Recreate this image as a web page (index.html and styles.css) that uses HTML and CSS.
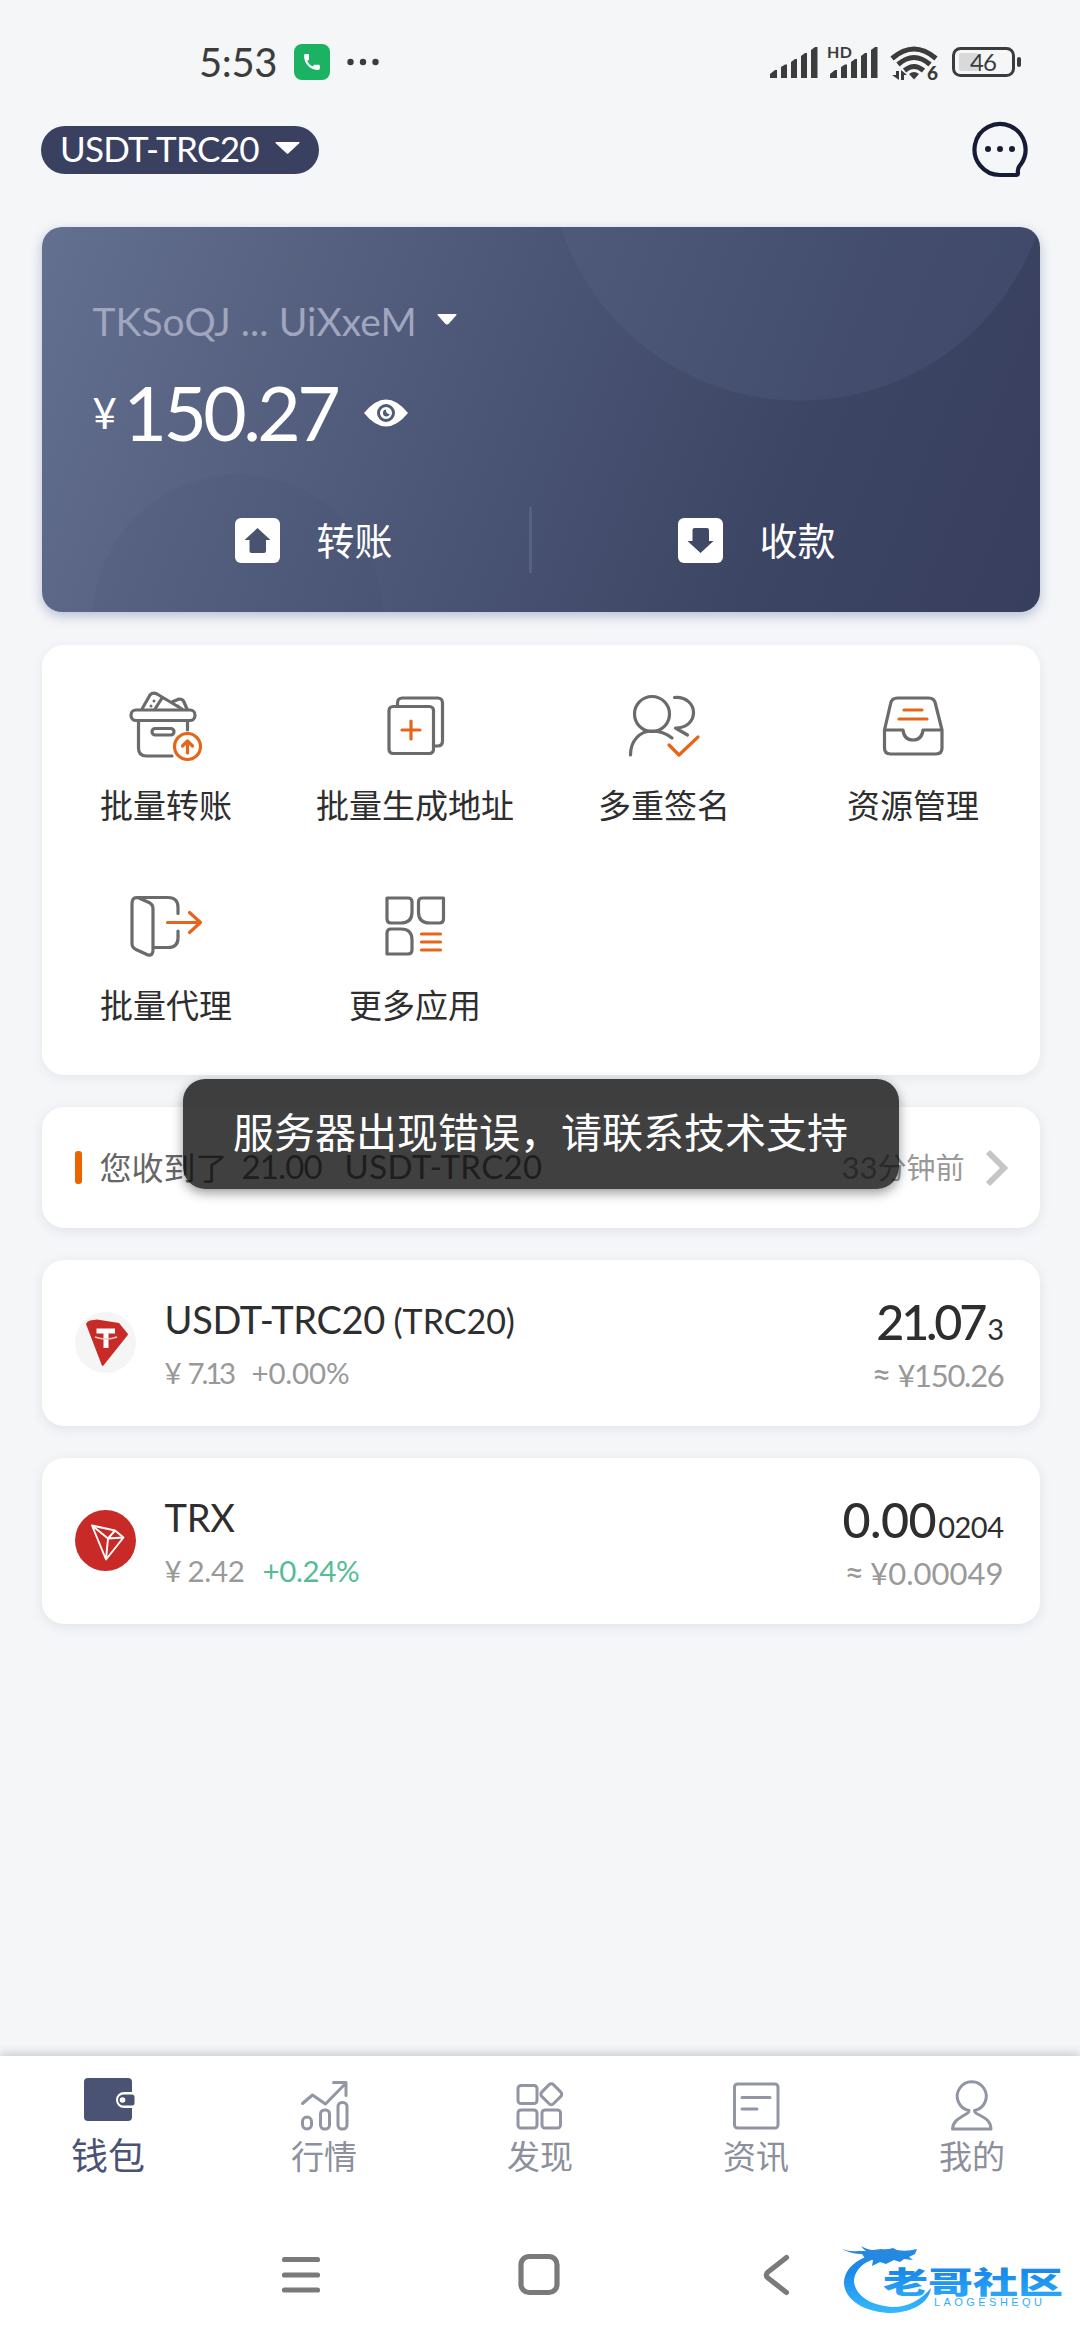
FILE: index.html
```html
<!DOCTYPE html>
<html lang="zh-CN">
<head>
<meta charset="utf-8">
<title>钱包</title>
<link rel="stylesheet" href="styles.css">
</head>
<body>
<div class="screen">
  <div class="status">
    <div class="status-left">
      <span class="clock">5:53</span>
      <svg class="phone-badge" width="36" height="36" viewBox="0 0 36 36"><rect width="36" height="36" rx="8" fill="#1bb264"/><path d="M10 11.500c0-1 .6-1.500 1.500-1.500h2.500c.6 0 1 .4 1 1v4.500c0 .6-.5 1-1 1h-1c1.500 3.500 3.500 5 6.500 6v-.8c0-.7.4-1 1-1h4c.8 0 1.300.5 1.300 1.200v2.400c0 1.200-.6 1.700-1.500 1.700C15.500 26 10 19 10 11.500z" fill="#fff"/></svg>
      <svg class="more-dots" width="32" height="8" viewBox="0 0 32 8" fill="#3c3c3c"><circle cx="3.500" cy="4" r="3.200"/><circle cx="16" cy="4" r="3.200"/><circle cx="28.500" cy="4" r="3.200"/></svg>
    </div>
    <svg class="status-icons" width="256" height="44" viewBox="768 40 256 44" fill="#3c3c3c">
      <g id="bars"><path d="M770 74l5-4h2v8h-7z"/><path d="M781 67l4-2.500h2V78h-6z"/><path d="M791 62l4-3h2v19h-6z"/><path d="M801 56l4-3h2v25h-6z"/><path d="M811 50l4-3h2.500v31H811z"/></g>
      <use href="#bars" x="60"/>
      <text class="hd" x="827" y="58" textLength="25">HD</text>
      <g fill="none" stroke="#3c3c3c" stroke-width="5"><path d="M892 58.500q22-19 44 0"/><path d="M898 64.500q16-14 32 0"/><path d="M904.500 70.500q9.500-8 19 0"/></g>
      <path d="M909 74q5-4 10 0l-5 5.500zM896 71h3v9l-7-5h4zM901 80V70l6 5h-3v5z"/>
      <text class="six" x="927" y="80">6</text>
      <rect x="953.500" y="48.500" width="60" height="27" rx="7" fill="none" stroke="#3c3c3c" stroke-width="3"/>
      <rect x="959" y="53" width="19" height="18" rx="2" fill="#d8d9da"/>
      <rect x="1017" y="57" width="4" height="10" rx="2"/>
      <text class="level" x="970" y="71" textLength="27">46</text>
    </svg>
  </div>

  <div class="topbar">
    <div class="chain">USDT-TRC20<svg width="25" height="12" viewBox="0 0 25 12"><path d="M1 0h23q1 .5 0 1.500L13.500 11.300q-1 1-2 0L1 1.500Q0 .5 1 0z" fill="#fff"/></svg></div>
    <svg class="chat" width="60" height="60" viewBox="970 120 60 60"><path d="M1000 175a25.500 25.500 0 1 1 21-11q-4 4-3 9 0 2-2 2z" fill="none" stroke="#171b35" stroke-width="4.200" stroke-linejoin="round"/><g fill="#171b35"><circle cx="988" cy="149" r="3"/><circle cx="1000" cy="149" r="3"/><circle cx="1012" cy="149" r="3"/></g></svg>
  </div>

  <main class="content">
    <section class="balance">
      <div class="address"><span>TKSoQJ ... UiXxeM</span><svg width="20" height="11" viewBox="0 0 20 11"><path d="M1 0h18q1 .5 0 1.500L12 9.500q-2 2-4 0L1 1.500Q0 .5 1 0z" fill="#fff"/></svg></div>
      <div class="total"><span class="yen">¥</span><span class="sum">150.27</span>
        <svg width="44" height="28" viewBox="0 0 44 28"><path d="M0 14Q22-13 44 14 22 41 0 14z" fill="#fff"/><circle cx="22" cy="14" r="7.500" fill="none" stroke="#505b7b" stroke-width="3"/><path d="M22 10.500a3.500 3.500 0 1 0 3.800 4.500q-4 0-3.800-4.500z" fill="#505b7b"/></svg>
      </div>
      <div class="actions">
        <div class="action"><svg width="45" height="45" viewBox="0 0 45 45"><rect width="45" height="45" rx="6" fill="#fff"/><path d="M22.500 10L35.500 22H31v11q0 2-2 2H16.500q-2 0-2-2V22H9.500z" fill="#49536f"/></svg><span>转账</span></div>
        <div class="action"><svg width="45" height="45" viewBox="0 0 45 45"><rect width="45" height="45" rx="6" fill="#fff"/><path d="M22.500 35L35.500 23H31V12q0-2-2-2H16.500q-2 0-2 2v11H9.500z" fill="#414967"/></svg><span>收款</span></div>
      </div>
    </section>

    <section class="tools">
      <div class="tool"><svg viewBox="126 687 80 80"><g class="ln"><rect x="131" y="710" width="64" height="10.500" rx="5"/><path d="M138.500 721v27q0 8 8 8H172M187.500 721v9"/><rect x="152" y="728.500" width="22" height="6.500" rx="3.200"/><path d="M142 709l8-14q3-3 7-1l25 15M155 709l7-11M172 702l7-3q4 0 5 3l3 7"/></g><g fill="#6b6b6b"><circle cx="154" cy="701" r="1.500"/><circle cx="151" cy="706" r="1.500"/><circle cx="178" cy="706" r="1.500"/></g><g class="or"><circle cx="187.500" cy="746.500" r="13"/><path d="M187.500 753v-12m-5 5l5-5 5 5"/></g></svg>批量转账</div>
      <div class="tool"><svg viewBox="375 687 80 80"><g class="ln"><rect x="389" y="706.500" width="44.500" height="47" rx="4"/><path d="M397.500 706v-3q0-5 5-5h35q5 0 5 5v38q0 5-5 5h-4"/></g><path class="or" d="M402 730h18M411 721v18"/></svg>批量生成地址</div>
      <div class="tool"><svg viewBox="624 687 80 80"><g class="ln"><circle cx="652" cy="714" r="17.500"/><path d="M630.500 755c0-14 9-24 21.500-24 8 0 15 3 20 7M674.500 697.500c12-1 19 7 19 15 0 9-7 15.500-18 15.500l12 7"/></g><path class="or" d="M669 745l10 10 19-18"/></svg>多重签名</div>
      <div class="tool"><svg viewBox="873 687 80 80"><g class="ln"><path d="M884.500 730l6-26q1-6 7-6h31q6 0 7 6l6.500 26v18q0 6-6 6h-45.500q-6 0-6-6zM885 730h18q1 10 10 10t10-10h19"/></g><path class="or" d="M904 710h18M899 719h28"/></svg>资源管理</div>
      <div class="tool"><svg viewBox="126 887 80 80"><g class="ln"><path d="M136 897.500h32q10 0 10 10v6M178 931v7q0 9.500-10 9.500h-14M132 904q0-8 7-6l10 4.500q4 2 4 6V950q0 6-5 5l-12-5.500q-4-2-4-6z"/></g><path class="or" d="M167.500 922.500h32.500M189.500 912.500l11 10-11 10"/></svg>批量代理</div>
      <div class="tool"><svg viewBox="375 887 80 80"><path class="ln" d="M387 898h21q4 0 4 4v10q0 11-11 11h-10q-4 0-4-4zM443.500 898h-21q-4 0-4 4v10q0 11 11 11h10q4 0 4-4zM387 954v-21q0-4 4-4h10q11 0 11 11v10q0 4-4 4z"/><path class="or" d="M421.500 934h19M421.500 942h19M421.500 950h19"/></svg>更多应用</div>
    </section>

    <section class="notice">
      <i class="mark"></i>
      <span class="got">您收到了</span><span class="qty">21.00</span><span class="coin">USDT-TRC20</span>
      <span class="ago"><b>33</b>分钟前</span>
      <svg width="24" height="38" viewBox="0 0 24 38"><path d="M3 3l16 16L3 35" fill="none" stroke="#c6c6c6" stroke-width="6"/></svg>
      <div class="toast">服务器出现错误，请联系技术支持</div>
    </section>

    <section class="asset">
      <svg width="61" height="61" viewBox="0 0 61 61"><circle cx="30.500" cy="30.500" r="30.500" fill="#f5f5f6"/><path d="M11 12q1-3 4-3.500l7-1 22 3.500 9 11q0 1-1 2L28 54q-1 0-1.500-1.500z" fill="#c82b27"/><path d="M21.500 16.500H40v5h-6.500V36h-5V21.500h-7z" fill="#fff"/><path d="M20 25q11 4 22 0" fill="none" stroke="#f2c9c8" stroke-width="1.500"/></svg>
      <div class="info"><div class="name"><span class="sym">USDT-TRC20</span><small>(TRC20)</small></div><div class="rate"><span class="cny">¥</span><span class="price p1">7.13</span><span class="chg">+0.00%</span></div></div>
      <div class="value"><div class="amt"><span class="a1">21.07</span><small>3</small></div><div class="approx"><i>≈</i><span class="v1">¥150.26</span></div></div>
    </section>
    <section class="asset">
      <svg width="61" height="61" viewBox="0 0 61 61"><circle cx="30.500" cy="30.500" r="30.500" fill="#c82b27"/><path d="M17 15.500l23 5 8.500 7L31 49.500zM17 15.500l16 13L31 49.500M33 28.500l7-8M33 28.500l15.500-1" fill="none" stroke="#fff" stroke-width="1.900" stroke-linejoin="round"/></svg>
      <div class="info"><div class="name"><span class="sym">TRX</span></div><div class="rate"><span class="cny">¥</span><span class="price">2.42</span><span class="chg up">+0.24%</span></div></div>
      <div class="value"><div class="amt"><span class="a2">0.00</span><small>0204</small></div><div class="approx"><i>≈</i><span>¥0.00049</span></div></div>
    </section>
  </main>

  <nav class="tabs">
    <div class="tab on"><svg viewBox="78 2074 60 60"><path d="M88 2078h40q4 0 4 4v10h-8a8 8 0 0 0 0 16h8v9q0 4-4 4H88q-4 0-4-4v-35q0-4 4-4z" fill="#4a5373"/><path d="M123.500 2094.500H132q2.500 0 2.500 2.500v6q0 2.500-2.500 2.500h-8.500a5.500 5.500 0 0 1 0-11z" fill="#4a5373"/><circle cx="122.500" cy="2100" r="2.800" fill="#fff"/></svg>钱包</div>
    <div class="tab"><svg viewBox="294 2074 60 60"><path d="M302.500 2103.500l10-8.500 13 9 20.500-21M333.500 2082.500h12.500v13"/><rect x="302.500" y="2117" width="9" height="12" rx="4.500"/><rect x="320.500" y="2110" width="9" height="19" rx="4"/><rect x="338" y="2102.500" width="9" height="26.500" rx="4"/></svg>行情</div>
    <div class="tab"><svg viewBox="510 2074 60 60"><rect x="518" y="2085.500" width="19" height="18" rx="3"/><rect x="518" y="2110" width="19" height="18" rx="3"/><rect x="542" y="2110" width="18.500" height="18" rx="3"/><rect x="543" y="2086" width="16.500" height="16.500" rx="3" transform="rotate(45 551.300 2094.300)"/></svg>发现</div>
    <div class="tab"><svg viewBox="726 2074 60 60"><rect x="734.500" y="2084" width="43.500" height="44" rx="3"/><path d="M742 2097.500h28M742 2109h15"/></svg>资讯</div>
    <div class="tab"><svg viewBox="942 2074 60 60"><path d="M969 2110.500a14.500 14.500 0 1 1 5.500 0q0 2 2 3c11 5.500 14 8 14.500 15.500h-38.500c.5-7.500 5-10 14.500-15.500q2-1 2-3z"/></svg>我的</div>
  </nav>

  <div class="sysnav">
    <svg class="sys" width="520" height="50" viewBox="276 2250 520 50"><path d="M284.500 2259.500h33M284.500 2275h33M284.500 2290h33"/><rect x="521" y="2256.500" width="36" height="36" rx="8"/><path d="M786.500 2257.500l-18.500 14.500q-3.500 3 0 6l18.500 14.500"/></svg>
    <svg class="brand" width="232" height="80" viewBox="838 2238 232 80">
      <defs><linearGradient id="blue" gradientUnits="userSpaceOnUse" x1="0" y1="2246" x2="0" y2="2312"><stop offset="0" stop-color="#2a88da"/><stop offset=".4" stop-color="#1a8aec"/><stop offset="1" stop-color="#35b8fc"/></linearGradient></defs>
      <g fill="url(#blue)">
        <path d="M878 2253C853 2259 844 2271 844 2284C846 2303 869 2313 892 2313C913 2312 929 2303 931 2288C921 2300 908 2307 893 2307C873 2306 856 2297 854 2282C854 2271 863 2260 883 2257Z"/>
        <path d="M842 2249q8 3 16 2l8 0q-3-2-5-5 7 4 12 4l8-1q6 1 12-1l4 2q10 2 20-1l-2 5-6 3 4 3-9-1-4 3-6-2-8 4-6-2-8 4 1-6-7 0-4-6q-11 0-20-5z"/>
        <text class="brand-cn" x="883" y="2293" textLength="180" lengthAdjust="spacingAndGlyphs">老哥社区</text>
        <text class="brand-en" x="934" y="2306" textLength="108">LAOGESHEQU</text>
      </g>
    </svg>
  </div>
</div>
</body>
</html>
```
FILE: styles.css
```css
* { box-sizing: border-box; }
body { margin: 0; background: #f4f6f8; font-family: Lato, "Noto Sans CJK SC", sans-serif; color: #2e2e2e; }
.screen { width: 1080px; height: 2340px; display: flex; flex-direction: column; overflow: hidden; white-space: nowrap; }
svg { display: block; flex: none; }
i { font-style: normal; }

.status { height: 120px; padding: 40px 56px 36px 199px; display: flex; justify-content: space-between; }
.status-left { display: flex; align-items: center; height: 44px; }
.clock { width: 95px; font-size: 40px; line-height: 44px; color: #3c3c3c; letter-spacing: -.4px; }
.more-dots { margin-left: 17px; }
.hd { font: bold 16px Lato, sans-serif; }
.six { font: 900 19px Lato, sans-serif; }
.level { font: 24px Lato, sans-serif; }

.topbar { height: 107px; padding: 0 50px 0 41px; display: flex; justify-content: space-between; align-items: flex-start; }
.chain { margin-top: 6px; width: 278px; height: 48px; border-radius: 24px; background: #3a4060; color: #fff; display: flex; align-items: center; justify-content: space-between; padding: 0 19px 4px 19px; font-size: 35px; letter-spacing: -.7px; }

.content { padding: 0 40.500px 0 41.500px; flex: 1; display: flex; flex-direction: column; }
.balance { height: 385px; flex: none; border-radius: 20px; padding: 68px 0 0 51px; color: #fff;
  background:
    radial-gradient(circle 252px at 758px -78px, rgba(110,130,170,.12) 251px, transparent 252px),
    radial-gradient(circle 146px at 196px 393px, rgba(52,58,92,.08) 145px, transparent 146px),
    linear-gradient(112deg, #64708f 0%, #4a5474 46%, #3d4564 74%, #383f5e 100%);
  box-shadow: 0 4px 12px rgba(70,90,140,.35); }
.address { display: flex; align-items: center; gap: 25px; height: 52px; font-size: 39px; color: #9fa6bd; }
.address span { width: 319px; letter-spacing: .05px; }
.address svg { margin-top: -3px; }
.total { display: flex; align-items: center; height: 132px; }
.yen { width: 31px; font-size: 42px; }
.sum { width: 240px; font-size: 75px; letter-spacing: -3.600px; line-height: 90px; margin-top: -2px; }
.actions { display: grid; grid-template-columns: 1fr 1fr; margin: 28px 0 0 -51px; }
.action { height: 66px; padding-left: 193px; display: flex; align-items: center; gap: 37px; font-size: 38px; }
.action span { margin-top: -4px; }
.action + .action { padding-left: 137px; }
.action:first-child { width: 490px; border-right: 3px solid #56607f; }

.tools { margin-top: 33px; height: 430px; flex: none; background: #fff; border-radius: 22px; padding: 42px 2px 0 0; display: grid; grid-template-columns: repeat(4, 1fr); grid-auto-rows: 200px; box-shadow: 0 3px 12px rgba(60,70,110,.08); }
.tool { display: flex; flex-direction: column; align-items: center; font-size: 33px; line-height: 48px; }
.tool svg { width: 80px; height: 80px; margin-bottom: 14px; }
.ln, .or { fill: none; stroke: #6b6b6b; stroke-width: 3.200; stroke-linecap: round; stroke-linejoin: round; }
.or { stroke: #e5661a; }

.notice { position: relative; margin-top: 32px; height: 121px; flex: none; background: #fff; border-radius: 22px; padding: 0 31px 0 33px; display: flex; align-items: center; box-shadow: 0 3px 12px rgba(60,70,110,.1); color: #666; font-size: 33px; }
.notice span { margin-top: -4px; }
.mark { width: 7px; height: 33px; border-radius: 3px; background: #eb6400; margin-right: 18px; }
.got { width: 142px; font-size: 32px; }
.qty { width: 103px; letter-spacing: -.8px; }
.coin { letter-spacing: .4px; }
.ago { margin-left: auto; margin-right: 20px; font-size: 29px; color: #999; }
.ago b { font-weight: 400; font-size: 31px; }
.toast { position: absolute; left: 141px; top: -28px; width: 716px; height: 110px; border-radius: 22px; background: rgba(10,10,10,.78); box-shadow: 0 4px 12px rgba(0,0,0,.4); color: #fff; font-size: 41px; line-height: 108px; text-align: center; }

.asset { margin-top: 32px; height: 166px; flex: none; background: #fff; border-radius: 22px; padding: 0 36px 0 33px; display: flex; align-items: center; box-shadow: 0 3px 12px rgba(60,70,110,.1); }
.asset > svg { margin-top: -1px; }
.info { margin: 5px 0 0 29px; }
.name { height: 54px; display: flex; align-items: baseline; font-size: 38px; line-height: 54px; }
.sym { min-width: 229px; letter-spacing: -.3px; }
.name small { font-size: 34px; }
.rate { height: 54px; display: flex; font-size: 29.500px; line-height: 54px; color: #999; }
.cny { width: 23px; }
.price { width: 75px; letter-spacing: -.3px; }
.p1 { width: 64px; letter-spacing: -3.200px; }
.chg { letter-spacing: -.2px; }
.up { color: #55bd95; letter-spacing: -.4px; }
.value { margin: 9px 0 0 auto; text-align: right; }
.amt { height: 54px; line-height: 54px; font-size: 48.500px; font-weight: 500; }
.amt small { font-size: 29px; font-weight: 400; margin-left: 2px; letter-spacing: -.5px; }
.a1 { letter-spacing: -3.200px; margin-right: 1px; }
.a2 { letter-spacing: -.5px; }
.approx { height: 54px; line-height: 52px; font-size: 31px; color: #999; }
.approx i { font-size: 34px; margin-right: 6px; display: inline-block; }
.v1 { letter-spacing: -1.300px; }

.tabs { height: 164px; flex: none; background: #fff; display: grid; grid-template-columns: repeat(5, 1fr); padding-top: 18px; box-shadow: 0 -2px 10px rgba(0,0,0,.2); }
.tab { display: flex; flex-direction: column; align-items: center; font-size: 33px; line-height: 44px; color: #8c8f9c; }
.tab svg { width: 60px; height: 60px; fill: none; stroke: #9295a4; stroke-width: 3; stroke-linecap: round; stroke-linejoin: round; }
.tab.on { font-size: 37px; color: #4a5373; }
.tab.on svg { stroke: none; }
.sysnav { height: 120px; flex: none; background: #fff; padding: 18px 10px 0 276px; display: flex; justify-content: space-between; }
.sys { margin-top: 12px; fill: none; stroke: #7a7a7a; stroke-width: 5.200; stroke-linecap: round; stroke-linejoin: round; }
.brand-cn { font: 900 30px "Noto Sans CJK SC", sans-serif; }
.brand-en { font: 11px "Liberation Sans", sans-serif; }
```
